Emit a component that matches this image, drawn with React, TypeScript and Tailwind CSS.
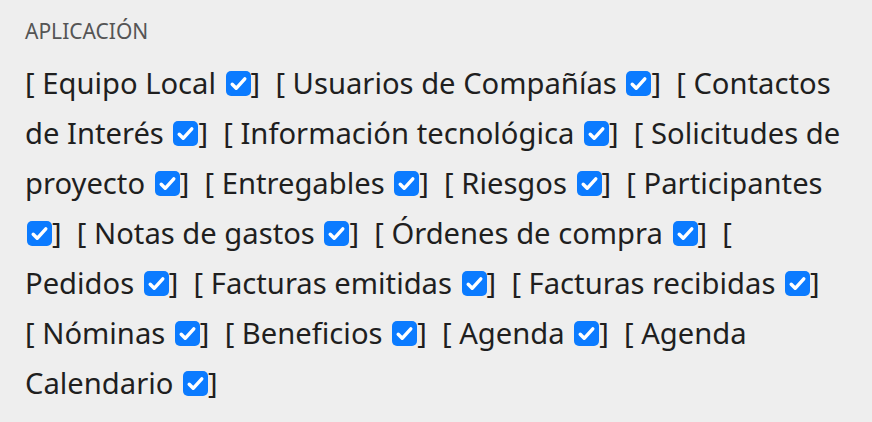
const items = [
  'Equipo Local',
  'Usuarios de Compañías',
  'Contactos de Interés',
  'Información tecnológica',
  'Solicitudes de proyecto',
  'Entregables',
  'Riesgos',
  'Participantes',
  'Notas de gastos',
  'Órdenes de compra',
  'Pedidos',
  'Facturas emitidas',
  'Facturas recibidas',
  'Nóminas',
  'Beneficios',
  'Agenda',
  'Agenda Calendario',
]

function Check() {
  return (
    <span className="inline-block w-[25px] h-[25px] rounded-[5px] bg-[#0b7bff] align-[-1.5px] ml-[2px]">
      <svg width="25" height="25" viewBox="0 0 25 25" fill="none">
        <path d="M6.2 13.2l4 4.1L18.8 7.8" stroke="#fff" strokeWidth="3.4" strokeLinecap="round" strokeLinejoin="round" />
      </svg>
    </span>
  )
}

export default function App() {
  return (
    <div className="w-[872px] h-[422px] bg-[#eeeeee] pl-[25px] pr-[28px] pt-[18px] font-['Noto_Sans',sans-serif]">
      <div className="text-[21px] leading-[26px] text-[#555555]">APLICACIÓN</div>
      <div className="mt-[14px] text-[29.2px] leading-[50px] text-[#1f1f1f]">
        {items.map((label, i) => (
          <span key={label}>
            [ {label} <Check />]{i < items.length - 1 ? '\u00a0 ' : ''}
          </span>
        ))}
      </div>
    </div>
  )
}
